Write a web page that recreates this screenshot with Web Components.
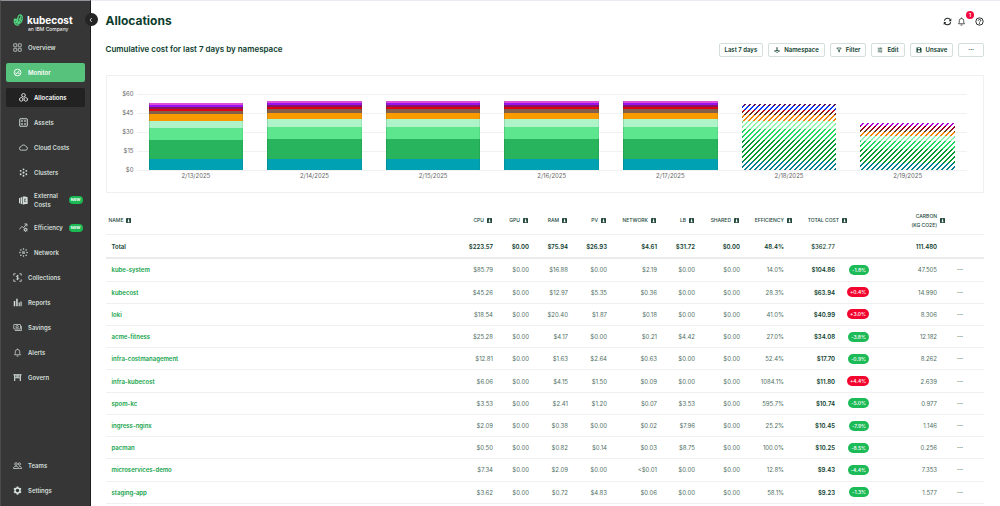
<!DOCTYPE html>
<html lang="en">
<head>
<meta charset="utf-8">
<meta name="viewport" content="width=device-width, initial-scale=1">
<title>Allocations</title>
<style>
  body { margin: 0; background: #fff; font-family: Inter, "Open Sans", sans-serif; color: #0c3d2d; }
</style>
</head>
<body>
<kc-app>
  <kc-sidebar slot="nav"></kc-sidebar>
  <kc-header slot="header" heading="Allocations"></kc-header>
  <kc-toolbar slot="toolbar" heading="Cumulative cost for last 7 days by namespace"></kc-toolbar>
  <kc-chart slot="chart"></kc-chart>
  <kc-table slot="table"></kc-table>
</kc-app>

<script>
const ICONS = {
  grid: '<g fill="none" stroke="currentColor" stroke-width="2"><rect x="2" y="2" width="8" height="8" rx="1"/><rect x="14" y="2" width="8" height="8" rx="1"/><rect x="2" y="14" width="8" height="8" rx="1"/><rect x="14" y="14" width="8" height="8" rx="1"/></g>',
  gauge: '<g fill="none" stroke="currentColor" stroke-width="2.4"><circle cx="12" cy="12" r="9"/><path d="M7 12l3 3 7-8M6 17l4-2M13 14h5"/></g>',
  cubes: '<g fill="none" stroke="currentColor" stroke-width="2.2"><path d="M12 1l4.5 2.6v5L12 11 7.500 8.600v-5zM6 12l4.500 2.600v5L6 22l-4.500-2.400v-5zM18 12l4.500 2.600v5L18 22l-4.500-2.400v-5z"/></g>',
  assets: '<g fill="none" stroke="currentColor" stroke-width="2.6"><rect x="2" y="2" width="20" height="20" rx="1"/></g><path fill="currentColor" d="M6 6h4v4H6zM14 6h4v4h-4zM6 14h4v4H6zM14 14h4v4h-4z"/>',
  cloud: '<path fill="none" stroke="currentColor" stroke-width="2.200" d="M6 19a4.500 4.500 0 0 1-.6-9A7 7 0 0 1 18.500 9.500 4.800 4.800 0 0 1 18.500 19z"/>',
  cluster: '<g fill="currentColor"><circle cx="12" cy="12" r="3"/><circle cx="12" cy="3.500" r="2.500"/><circle cx="12" cy="20.500" r="2.500"/><circle cx="4.500" cy="7.500" r="2.500"/><circle cx="19.500" cy="7.500" r="2.500"/><circle cx="4.500" cy="16.500" r="2.500"/><circle cx="19.500" cy="16.500" r="2.500"/></g>',
  external: '<path fill="currentColor" d="M0 5h3v14H0zM4.500 3h4v18h-4zM10 1h7l6 2v18h-6l-7 2z"/><path fill="none" stroke="#363636" stroke-width="1.800" d="M19 8h-4v7h4"/>',
  efficiency: '<g fill="none" stroke="currentColor" stroke-width="2.200"><path d="M1 17l7-8 4 4 8-10M14.500 2.500H21V9"/><circle cx="17.500" cy="18" r="3.500"/></g><path stroke="currentColor" stroke-width="1.800" d="M17.500 12.500v11M12 18h11M13.500 14l8 8M21.500 14l-8 8"/><circle cx="17.500" cy="18" r="1.800" fill="#363636"/>',
  network: '<rect x="8" y="8" width="8" height="8" rx="1" fill="#8e9994"/><g fill="currentColor"><circle cx="12" cy="2.500" r="2"/><circle cx="12" cy="21.500" r="2"/><circle cx="2.500" cy="12" r="2"/><circle cx="21.500" cy="12" r="2"/><circle cx="5" cy="5" r="2"/><circle cx="19" cy="5" r="2"/><circle cx="5" cy="19" r="2"/><circle cx="19" cy="19" r="2"/></g>',
  collections: '<g fill="none" stroke="currentColor" stroke-width="2.200"><path d="M2 7V2h5M17 2h5v5M22 17v5h-5M7 22H2v-5"/><path d="M15.500 8.500C14 6.500 9 6.500 9 9.300S15.500 11.500 15.500 14.500 10 17.500 8.500 15.500M12 5v14"/></g>',
  reports: '<path fill="currentColor" d="M2 8h4v14H2zM8.500 2h4v20h-4zM15 12h3v10h-3zM20 9h3v13h-3z"/>',
  savings: '<g fill="none" stroke="currentColor" stroke-width="2"><rect x="2" y="4" width="18" height="12" rx="1"/><circle cx="11" cy="10" r="3.200"/><path d="M5 20h18V8"/></g>',
  bell: '<path fill="none" stroke="currentColor" stroke-width="2" d="M4 18h16l-2-3V10a6 6 0 0 0-12 0v5zM12 4V1.500M9.500 21.500h5"/>',
  govern: '<path fill="currentColor" d="M1 3h22v3H1zM3 6h3v15H3zM18 6h3v15h-3zM7.500 6h2v8h-2zM11 6h2v8h-2zM14.500 6h2v8h-2zM3 12h18v2H3z"/>',
  teams: '<g fill="none" stroke="currentColor" stroke-width="2"><circle cx="8" cy="8" r="3.500"/><circle cx="17" cy="8" r="3"/><path d="M1 20c0-8 14-8 14 0zM16 14c4 0 7 2 7 6h-6"/></g>',
  gear: '<path fill="none" stroke="currentColor" stroke-width="4" d="M12 5.500a6.500 6.500 0 1 1 0 13 6.500 6.500 0 1 1 0-13z"/><path stroke="currentColor" stroke-width="4.500" d="M12 1v5M12 18v5M2.500 6.500l4 2.300M17.500 15.200l4 2.300M2.500 17.500l4-2.300M17.500 8.800l4-2.300"/>',
  leaf: '<g fill="none" stroke="#4fd37d" stroke-width="2.800"><ellipse cx="15" cy="10" rx="5" ry="9" transform="rotate(8 15 10)"/><path d="M12.500 23C6 24 1 19 3 10.500 8 9 12.500 14 13 22M4 12l8 7M3 18l8-1M17 4l-3 14M12 9l6 4M9 12v8"/></g>',
  chevron: '<path fill="none" stroke="currentColor" stroke-width="3" d="M15 4l-7 8 7 8"/>',
  refresh: '<g fill="none" stroke="currentColor" stroke-width="2.800"><path d="M3.500 10a9 9 0 0 1 16-3M20.500 14a9 9 0 0 1-16 3"/></g><path fill="currentColor" d="M22 3v8h-7zM2 21v-8h7z"/>',
  help: '<g fill="none" stroke="currentColor" stroke-width="2.500"><circle cx="12" cy="12" r="9.800"/><path d="M8.500 10c0-4.500 7-4.500 7-.5 0 2.500-3.500 2-3.500 5M12 16.500V19"/></g>',
  namespace: '<path fill="none" stroke="currentColor" stroke-width="2" d="M12 5v8M4 18l8-5 8 5"/><g fill="currentColor"><circle cx="12" cy="4" r="3"/><circle cx="12" cy="13" r="3.500"/><circle cx="4" cy="16" r="3"/><circle cx="20" cy="16" r="3"/><circle cx="12" cy="21" r="2.500"/></g>',
  filter: '<path fill="none" stroke="currentColor" stroke-width="2.600" d="M3 4h18l-7 8v8l-4-2v-6z"/>',
  edit: '<path fill="none" stroke="currentColor" stroke-width="2.600" d="M3 5h9M16 5h5M3 12h4M11 12h10M3 19h11M17 19h4M14 2v6M9 9v6M16 16v6"/>',
  save: '<path fill="currentColor" fill-rule="evenodd" d="M2 2h16l4 4v16H2zM7 4v5h9V4zM7 13v7h10v-7z"/>',
  info: '<rect width="24" height="24" rx="3" fill="currentColor"/><path fill="#fff" d="M10 4h5v4h-5zM9 10h6v7h2v3H8v-3h2v-4H9z"/>'
};
const icon = name => `<svg class="icon" viewBox="0 0 24 24" aria-hidden="true">${ICONS[name]}</svg>`;

class Base extends HTMLElement {
  constructor() {
    super();
    this.attachShadow({ mode: 'open' });
  }
  connectedCallback() {
    this.shadowRoot.innerHTML =
      `<style>:host,*{box-sizing:border-box}.icon{display:block;flex:none}${this.css()}</style>${this.html()}`;
  }
}

customElements.define('kc-app', class extends Base {
  css() {
    return `
      :host { display: flex; min-height: 100vh; }
      ::slotted([slot=nav]) { flex: 0 0 90px; }
      main { flex: 1; min-width: 0; padding: 0 16px 0 15px; border-top: 1px solid #eaeaf2; }
    `;
  }
  html() {
    return `<slot name="nav"></slot>
      <main><slot name="header"></slot><slot name="toolbar"></slot><slot name="chart"></slot><slot name="table"></slot></main>`;
  }
});

customElements.define('kc-nav-item', class extends Base {
  css() {
    return `
      :host { display: block; }
      a { display: flex; align-items: center; gap: 6px; min-height: 19px; padding: 0 2px 0 7px; border-radius: 2px;
          color: #d3ded9; font-size: 6px; line-height: 9px; font-weight: 600; text-decoration: none; }
      .icon { width: 9px; height: 9px; }
      :host([sub]) a { padding-left: 13px; }
      :host([tall]) a { min-height: 24px; }
      :host([tone=active]) a { background: #56c27c; color: #fff; }
      :host([tone=current]) a { background: #222; color: #fff; }
      .new { margin-left: auto; flex: none; padding: 0 2px; border-radius: 4px; background: #1db954; color: #fff;
             font-size: 4px; line-height: 8px; font-weight: 700; }
    `;
  }
  html() {
    return `<a href="#">${icon(this.getAttribute('icon'))}<span><slot></slot></span>${
      this.hasAttribute('new') ? '<span class="new">NEW</span>' : ''}</a>`;
  }
});

customElements.define('kc-sidebar', class extends Base {
  css() {
    return `
      :host { display: flex; flex-direction: column; position: relative; background: #363636; color: #fff;
              border-top: 1px solid #8f9296; border-right: 1px solid #1c1c1c; border-left: 1px solid #4b4b4b; }
      .brand { display: flex; align-items: flex-start; gap: 3px; padding: 12px 0 0 12px; height: 37px; }
      .brand .icon { width: 11px; height: 14px; }
      .name { padding-top: 1px; font-size: 10px; line-height: 12px; font-weight: 700; }
      .sub { padding-left: 1px; font-size: 5px; line-height: 6px; }
      button { position: absolute; right: -8px; top: 12px; width: 13px; height: 13px; border: 0; border-radius: 50%;
               padding: 0; background: #242424; color: #fff; display: grid; place-items: center; }
      button .icon { width: 6px; height: 6px; }
      nav { flex: 1; display: flex; flex-direction: column; gap: 6px; padding: 0 5px 6px; }
      .foot { margin-top: auto; display: grid; gap: 6px; }
    `;
  }
  html() {
    return `
      <div class="brand">${icon('leaf')}<div><div class="name">kubecost</div><div class="sub">an IBM Company</div></div></div>
      <button aria-label="Collapse menu">${icon('chevron')}</button>
      <nav>
        <kc-nav-item icon="grid">Overview</kc-nav-item>
        <kc-nav-item icon="gauge" tone="active">Monitor</kc-nav-item>
        <kc-nav-item icon="cubes" sub tone="current">Allocations</kc-nav-item>
        <kc-nav-item icon="assets" sub>Assets</kc-nav-item>
        <kc-nav-item icon="cloud" sub>Cloud Costs</kc-nav-item>
        <kc-nav-item icon="cluster" sub>Clusters</kc-nav-item>
        <kc-nav-item icon="external" sub tall new>External Costs</kc-nav-item>
        <kc-nav-item icon="efficiency" sub new>Efficiency</kc-nav-item>
        <kc-nav-item icon="network" sub>Network</kc-nav-item>
        <kc-nav-item icon="collections">Collections</kc-nav-item>
        <kc-nav-item icon="reports">Reports</kc-nav-item>
        <kc-nav-item icon="savings">Savings</kc-nav-item>
        <kc-nav-item icon="bell">Alerts</kc-nav-item>
        <kc-nav-item icon="govern">Govern</kc-nav-item>
        <div class="foot">
          <kc-nav-item icon="teams">Teams</kc-nav-item>
          <kc-nav-item icon="gear">Settings</kc-nav-item>
        </div>
      </nav>`;
  }
});

customElements.define('kc-header', class extends Base {
  css() {
    return `
      :host { display: flex; align-items: center; justify-content: space-between; height: 40px; }
      h1 { margin: 0; font-size: 12px; line-height: 16px; font-weight: 700; color: #0c3d2d; }
      .actions { display: flex; gap: 5px; }
      button { position: relative; border: 0; padding: 0; background: none; color: #1d2421; }
      .icon { width: 9px; height: 9px; }
      .count { position: absolute; right: -8px; top: -6px; width: 8px; height: 8px; border-radius: 50%; background: #f5083f;
               color: #fff; font: 600 5px/8px Inter, sans-serif; text-align: center; }
      .bell { margin-right: 4px; }
    `;
  }
  html() {
    return `<h1>${this.getAttribute('heading')}</h1>
      <div class="actions">
        <button aria-label="Refresh">${icon('refresh')}</button>
        <button class="bell" aria-label="Notifications">${icon('bell')}<span class="count">1</span></button>
        <button aria-label="Help">${icon('help')}</button>
      </div>`;
  }
});

customElements.define('kc-toolbar', class extends Base {
  css() {
    return `
      :host { display: flex; align-items: center; justify-content: space-between; height: 18px; }
      h2 { margin: 0 0 2px; font-size: 8px; line-height: 12px; font-weight: 600; color: #0c3d2d; }
      .buttons { display: flex; gap: 5px; }
      button { display: flex; align-items: center; gap: 4px; height: 14px; padding: 0 5px; border: 1px solid #d3dfda;
               border-radius: 2px; background: #fff; color: #0c3d2d; font: 600 6px/8px Inter, sans-serif; }
      .icon { width: 6px; height: 6px; }
      .more { padding: 0 9px; }
    `;
  }
  html() {
    return `<h2>${this.getAttribute('heading')}</h2>
      <div class="buttons">
        <button>Last 7 days</button>
        <button>${icon('namespace')}Namespace</button>
        <button>${icon('filter')}Filter</button>
        <button>${icon('edit')}Edit</button>
        <button>${icon('save')}Unsave</button>
        <button class="more" aria-label="More">···</button>
      </div>`;
  }
});

const TEAL = '#00a1b2', GREEN = '#28b45c', MID = '#5ee68f', PALE = '#aff3c8', ORANGE = '#f89a00',
      BROWN = '#84604a', RED = '#e00012', MAROON = '#851562', PURPLE = '#9a10f2', PINK = '#dc50d8';
const FULL = [[PINK, 2], [PURPLE, 2], [MAROON, 2], [RED, 2], [BROWN, 4], [ORANGE, 6], [PALE, 8], [MID, 12], [GREEN, 20], [TEAL, 11]];
const DAYS = [
  { date: '2/13/2025', parts: [[PINK, 2], [PURPLE, 2], [MAROON, 2], [RED, 2], [BROWN, 3], [ORANGE, 7], [PALE, 7], [MID, 12], [GREEN, 19], [TEAL, 11]] },
  { date: '2/14/2025', parts: FULL },
  { date: '2/15/2025', parts: FULL },
  { date: '2/16/2025', parts: FULL },
  { date: '2/17/2025', parts: FULL },
  { date: '2/18/2025', hatched: true, parts: [['#5a1060', 2], ['#0a3cf5', 4], ['#c90018', 2], ['#6e2a1c', 3], ['#f58200', 6], ['#8ef5b2', 8], ['#1fd95f', 11], ['#009a2e', 21], ['#008294', 9]] },
  { date: '2/19/2025', hatched: true, parts: [['#b400d8', 3], ['#a3002c', 4], ['#6e4020', 2], ['#f58200', 4], ['#8ef5b2', 5], ['#1fd95f', 8], ['#009a2e', 14], ['#008294', 7]] }
];

customElements.define('kc-chart', class extends Base {
  css() {
    return `
      :host { display: block; margin-top: 16px; }
      figure { display: flex; gap: 3px; margin: 0; height: 118px; padding: 13px 16px 0 9px; border: 1px solid #f0f0f0; }
      .axis { display: flex; flex-direction: column; justify-content: space-between; flex: 0 0 18px; height: 86px;
              font-size: 6px; line-height: 10px; color: #666; text-align: right; }
      .plot { flex: 1; }
      .area { display: flex; height: 77px; margin-top: 5px;
              background: repeating-linear-gradient(#f1f1f1 0 1px, transparent 1px 19px); }
      .day { flex: 1; display: flex; flex-direction: column; justify-content: flex-end; padding: 0 12px 1px; }
      .bar { position: relative; }
      .part { box-shadow: inset 1px 0 rgba(0,60,20,.14), inset -1px 0 rgba(0,60,20,.08); }
      .hatched::after { content: ""; position: absolute; inset: 0; background-size: 5px 5px;
              background-image: linear-gradient(135deg, #fff 22%, transparent 22% 50%, #fff 50% 72%, transparent 72%); }
      .dates { display: flex; font-size: 6px; line-height: 10px; color: #666; }
      .dates span { flex: 1; text-align: center; }
    `;
  }
  html() {
    return `<figure aria-label="Daily cost by namespace">
      <div class="axis"><span>$60</span><span>$45</span><span>$30</span><span>$15</span><span>$0</span></div>
      <div class="plot">
        <div class="area">${DAYS.map(d => `<div class="day"><div class="bar${d.hatched ? ' hatched' : ''}">${
          d.parts.map(([c, h]) => `<div class="part" style="height:${h}px;background:${c}"></div>`).join('')}</div></div>`).join('')}</div>
        <div class="dates">${DAYS.map(d => `<span>${d.date}</span>`).join('')}</div>
      </div>
    </figure>`;
  }
});

const ROWS = [
  ['kube-system', '$85.79', '$0.00', '$16.88', '$0.00', '$2.19', '$0.00', '$0.00', '14.0%', '$104.86', '-1.8%', '47.505'],
  ['kubecost', '$45.26', '$0.00', '$12.97', '$5.35', '$0.36', '$0.00', '$0.00', '28.3%', '$63.94', '+0.4%', '14.990'],
  ['loki', '$18.54', '$0.00', '$20.40', '$1.87', '$0.18', '$0.00', '$0.00', '41.0%', '$40.99', '+3.0%', '8.306'],
  ['acme-fitness', '$25.28', '$0.00', '$4.17', '$0.00', '$0.21', '$4.42', '$0.00', '27.0%', '$34.08', '-3.8%', '12.182'],
  ['infra-costmanagement', '$12.81', '$0.00', '$1.63', '$2.64', '$0.63', '$0.00', '$0.00', '52.4%', '$17.70', '-0.9%', '8.262'],
  ['infra-kubecost', '$6.06', '$0.00', '$4.15', '$1.50', '$0.09', '$0.00', '$0.00', '1084.1%', '$11.80', '+4.4%', '2.639'],
  ['spom-kc', '$3.53', '$0.00', '$2.41', '$1.20', '$0.07', '$3.53', '$0.00', '595.7%', '$10.74', '-5.0%', '0.977'],
  ['ingress-nginx', '$2.09', '$0.00', '$0.38', '$0.00', '$0.02', '$7.96', '$0.00', '25.2%', '$10.45', '-7.9%', '1.146'],
  ['pacman', '$0.50', '$0.00', '$0.82', '$0.14', '$0.03', '$8.75', '$0.00', '100.0%', '$10.25', '-8.5%', '0.256'],
  ['microservices-demo', '$7.34', '$0.00', '$2.09', '$0.00', '<$0.01', '$0.00', '$0.00', '12.8%', '$9.43', '-4.4%', '7.353'],
  ['staging-app', '$3.62', '$0.00', '$0.72', '$4.83', '$0.06', '$0.00', '$0.00', '58.1%', '$9.23', '-1.3%', '1.577']
];
const TOTAL = ['Total', '$223.57', '$0.00', '$75.94', '$26.93', '$4.61', '$31.72', '$0.00', '48.4%', '$362.77', '', '111.480'];
const COLUMNS = [
  ['NAME', 'name'], ['CPU', 'cpu'], ['GPU', 'gpu'], ['RAM', 'ram'], ['PV', 'pv'], ['NETWORK', 'net'], ['LB', 'lb'],
  ['SHARED', 'shared'], ['EFFICIENCY', 'eff'], ['TOTAL COST', 'total'], ['', 'change'], ['CARBON<br>(KG CO2E)', 'carbon'], ['', 'menu']
];

customElements.define('kc-table', class extends Base {
  css() {
    return `
      :host { display: block; margin-top: 14px; }
      table { width: 100%; height: 297px; table-layout: fixed; border-collapse: separate; border-spacing: 0;
              font-size: 6px; line-height: 9px; color: #4f6f64; }
      col.cpu { width: 60px } col.gpu { width: 36px } col.ram { width: 39px } col.pv { width: 39px } col.net { width: 50px }
      col.lb { width: 38px } col.shared { width: 45px } col.eff { width: 52px } col.total { width: 55px }
      col.change { width: 22px } col.carbon { width: 76px } col.menu { width: 39px }
      th, td { height: 22px; padding: 0; border-bottom: 1px solid #f0f0f0; text-align: right; font-weight: 400; white-space: nowrap; }
      thead th { height: 28px; font-size: 5px; line-height: 9px; font-weight: 500; color: #24493c; }
      .head { display: flex; align-items: center; justify-content: flex-end; gap: 3px; padding-right: 1px; }
      .head .icon { width: 5px; height: 5px; }
      thead .name .head { justify-content: flex-start; padding-left: 3px; }
      thead .eff .head, thead .total .head, thead .carbon .head { padding-right: 0; }
      tbody .name { padding-left: 6px; text-align: left; font-weight: 600; }
      tbody .eff { padding-right: 8px; }
      tbody .total { padding-right: 12px; color: #0c3d2d; font-weight: 600; }
      tbody .carbon { padding-right: 8px; }
      tbody .menu { padding-right: 21px; }
      a { color: #14a34a; text-decoration: none; }
      .sum th, .sum td { height: 24px; border-bottom: 2px solid #e9eceb; color: #0c3d2d; font-weight: 600; }
      .sum td.total { font-weight: 500; }
      .pill { display: inline-block; padding: 0 3px; border-radius: 5px; background: #1cbb58; color: #fff;
              font-size: 5px; line-height: 10px; font-weight: 500; vertical-align: top; }
      .pill.up { background: #f2062f; }
      button { border: 0; padding: 0; background: none; color: inherit; font: 700 6px/9px Inter, sans-serif; }
    `;
  }
  row(values, sum) {
    const cells = values.slice(1).map((v, i) => {
      const cls = COLUMNS[i + 1][1];
      const body = cls === 'change' && v ? `<span class="pill${v[0] === '+' ? ' up' : ''}">${v}</span>` : v.replace('<', '&lt;');
      return `<td class="${cls}">${body}</td>`;
    }).join('');
    const name = sum ? values[0] : `<a href="#">${values[0]}</a>`;
    const menu = sum ? '' : `<button aria-label="Actions for ${values[0]}">···</button>`;
    return `<tr${sum ? ' class="sum"' : ''}><th scope="row" class="name">${name}</th>${cells}<td class="menu">${menu}</td></tr>`;
  }
  html() {
    return `<table>
      <colgroup>${COLUMNS.map(c => `<col class="${c[1]}">`).join('')}</colgroup>
      <thead><tr>${COLUMNS.map(([t, c]) => t
        ? `<th scope="col" class="${c}"><div class="head"><span>${t}</span>${icon('info')}</div></th>`
        : `<td class="${c}"></td>`).join('')}</tr></thead>
      <tbody>${this.row(TOTAL, true)}${ROWS.map(r => this.row(r)).join('')}</tbody>
    </table>`;
  }
});
</script>
</body>
</html>
